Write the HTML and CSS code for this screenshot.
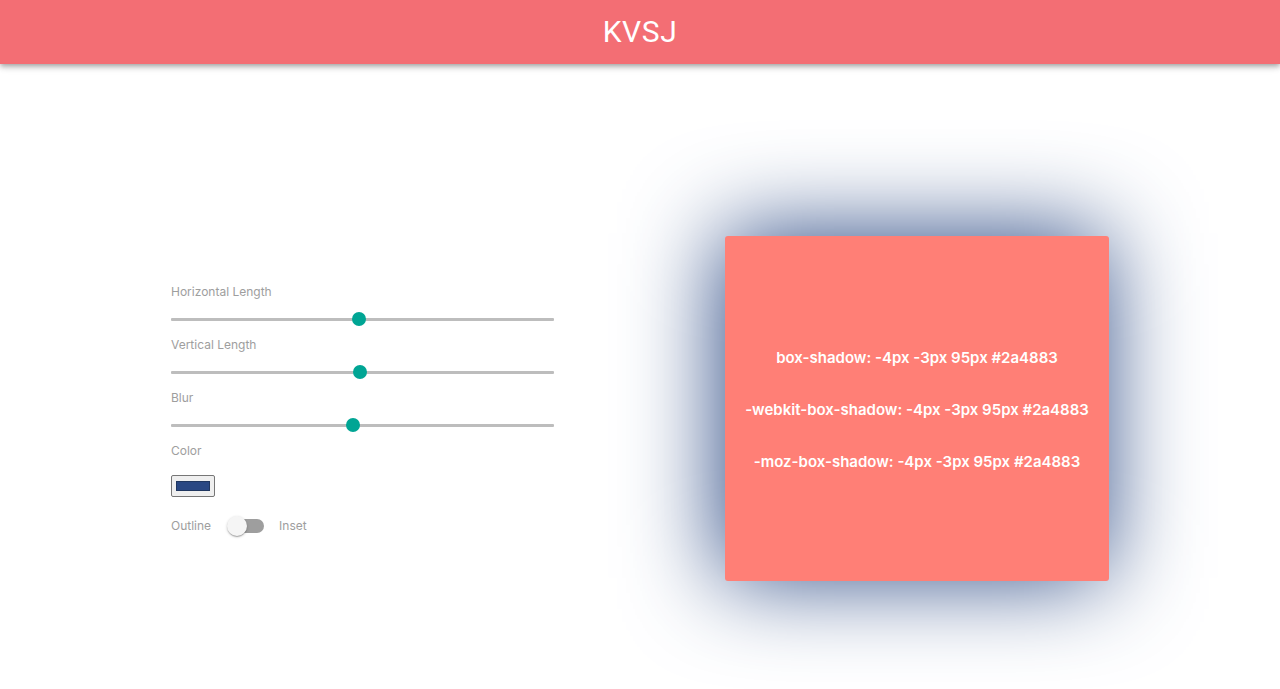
FILE: index.html
```html
<!DOCTYPE html>
<html lang="en">
<head>
<meta charset="utf-8">
<title>KVSJ</title>
<link rel="stylesheet" href="styles.css">
</head>
<body>
<header class="app-bar">
  <h1 class="app-title">KVSJ</h1>
</header>
<main class="main">
  <section class="controls">
    <label class="ctl-label">Horizontal Length</label>
    <div class="slider-row">
      <input class="slider" type="range" min="-200" max="200" value="-4">
    </div>
    <label class="ctl-label">Vertical Length</label>
    <div class="slider-row">
      <input class="slider" type="range" min="-200" max="200" value="-3">
    </div>
    <label class="ctl-label">Blur</label>
    <div class="slider-row">
      <input class="slider" type="range" min="0" max="200" value="95">
    </div>
    <label class="ctl-label">Color</label>
    <div class="color-picker"><span class="color-swatch"></span></div>
    <div class="switch-row">
      <span class="switch-text">Outline</span>
      <span class="switch">
        <span class="switch-track"></span>
        <span class="switch-thumb"></span>
      </span>
      <span class="switch-text">Inset</span>
    </div>
  </section>
  <section class="preview">
    <div class="shadow-box">
      <p class="code-line">box-shadow: -4px -3px 95px #2a4883</p>
      <p class="code-line">-webkit-box-shadow: -4px -3px 95px #2a4883</p>
      <p class="code-line">-moz-box-shadow: -4px -3px 95px #2a4883</p>
    </div>
  </section>
</main>
</body>
</html>
```

FILE: styles.css
```css
* { box-sizing: border-box; }

html, body {
  margin: 0;
  padding: 0;
  background: #ffffff;
  font-family: Inter, "Liberation Sans", Arial, sans-serif;
  overflow: hidden;
}

.app-bar {
  height: 64px;
  background: #f36e74;
  display: flex;
  align-items: center;
  justify-content: center;
  box-shadow: 0 2px 4px -1px rgba(0,0,0,0.2), 0 4px 5px 0 rgba(0,0,0,0.14), 0 1px 10px 0 rgba(0,0,0,0.12);
  position: relative;
  z-index: 2;
}

.app-title {
  margin: 0;
  color: #ffffff;
  font-family: Roboto, "Liberation Sans", sans-serif;
  font-weight: 400;
  font-size: 30px;
  line-height: 1;
  letter-spacing: 0.6px;
}

.main {
  height: 625px;
  padding-top: 64px;
  display: flex;
  justify-content: space-evenly;
  align-items: center;
}

.controls {
  width: 383px;
  display: flex;
  flex-direction: column;
  align-items: flex-start;
  padding-top: 3px;
}

.ctl-label {
  display: block;
  font-size: 12px;
  line-height: 16px;
  height: 16px;
  color: #9e9e9e;
}

.slider-row {
  width: 100%;
  height: 37px;
  display: flex;
  align-items: center;
  padding-top: 1px;
}

.slider {
  -webkit-appearance: none;
  appearance: none;
  width: 100%;
  height: 14px;
  margin: 0;
  background: transparent;
  outline: none;
}

.slider::-webkit-slider-runnable-track {
  height: 3px;
  background: #bdbdbd;
  border-radius: 1px;
}

.slider::-webkit-slider-thumb {
  -webkit-appearance: none;
  appearance: none;
  width: 14px;
  height: 14px;
  border-radius: 50%;
  background: #00a594;
  margin-top: -5.5px;
  border: none;
}

.color-picker {
  margin-top: 16px;
  width: 44px;
  height: 22px;
  border: 1px solid #767676;
  border-radius: 2px;
  background: #efefef;
  padding: 5px 4px;
  display: flex;
}

.color-swatch {
  flex: 1;
  background: #2a4883;
  border: 1px solid #203760;
}

.switch-row {
  margin-top: 19px;
  height: 20px;
  display: flex;
  align-items: center;
}

.switch-text {
  font-size: 12px;
  line-height: 16px;
  color: #9e9e9e;
}

.switch {
  position: relative;
  width: 37px;
  height: 20px;
  margin: 0 15px 0 16px;
}

.switch-track {
  position: absolute;
  left: 3px;
  top: 3px;
  width: 34px;
  height: 14px;
  border-radius: 7px;
  background: #9e9e9e;
}

.switch-thumb {
  position: absolute;
  left: 0;
  top: 0;
  width: 20px;
  height: 20px;
  border-radius: 50%;
  background: #f5f5f5;
  box-shadow: 0 1px 3px 0 rgba(0,0,0,0.2), 0 1px 1px 0 rgba(0,0,0,0.14), 0 2px 1px -1px rgba(0,0,0,0.12);
}

.preview {
  width: 384px;
  display: flex;
  justify-content: center;
}

.shadow-box {
  width: 384px;
  height: 345px;
  background: #ff7f76;
  border-radius: 3px;
  box-shadow: -4px -3px 95px #2a4883;
  display: flex;
  flex-direction: column;
  justify-content: center;
  align-items: center;
  gap: 34px;
  padding-top: 2px;
}

.code-line {
  margin: 0;
  color: #ffffff;
  font-family: Inter, "Noto Sans", sans-serif;
  font-weight: 600;
  font-size: 15px;
  line-height: 18px;
  white-space: nowrap;
}
```
